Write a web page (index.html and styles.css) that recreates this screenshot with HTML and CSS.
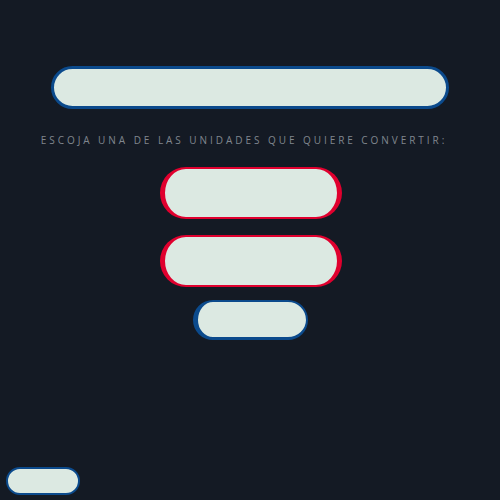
FILE: index.html
```html
<!DOCTYPE html>
<html lang="es">
<head>
<meta charset="utf-8">
<title>Conversor</title>
<link rel="stylesheet" href="styles.css">
</head>
<body>
<main class="page">
  <input class="field" type="text" aria-label="valor">
  <p class="prompt">ESCOJA UNA DE LAS UNIDADES QUE QUIERE CONVERTIR:</p>
  <div class="options">
    <button class="unit"></button>
    <button class="unit"></button>
    <button class="go"></button>
  </div>
</main>
<footer class="foot">
  <button class="back"></button>
</footer>
</body>
</html>
```

FILE: styles.css
```css
html, body {
  margin: 0;
  padding: 0;
}
body {
  background: #141a24;
  min-height: 100vh;
  display: flex;
  flex-direction: column;
  font-family: "Open Sans", Lato, sans-serif;
  box-sizing: border-box;
}
.page {
  display: flex;
  flex-direction: column;
  align-items: center;
  padding-top: 66px;
}
.field {
  box-sizing: border-box;
  width: 398px;
  height: 43px;
  margin: 0;
  background: #dce9e2;
  border: 3px solid #0b4a8c;
  border-radius: 22px;
  outline: none;
}
.prompt {
  margin: 25px 0 0;
  padding-right: 12px;
  color: #80868e;
  font-size: 10px;
  line-height: 12px;
  letter-spacing: 2.95px;
}
.options {
  display: flex;
  flex-direction: column;
  align-items: center;
  margin-top: 21px;
}
.unit {
  box-sizing: border-box;
  width: 182px;
  height: 52px;
  margin: 0 0 16px 2px;
  background: #dce9e2;
  border-style: solid;
  border-color: #e0002e;
  border-width: 2px 5px;
  border-radius: 26px;
  padding: 0;
}
.unit + .unit {
  margin-bottom: 13px;
}
.go {
  box-sizing: border-box;
  width: 115px;
  height: 40px;
  margin: 0;
  background: #dce9e2;
  border-style: solid;
  border-color: #0b4a8c;
  border-width: 2px 2px 3px 5px;
  border-radius: 20px;
  padding: 0;
}
.foot {
  margin-top: auto;
  padding: 0 0 5px 6px;
  display: flex;
}
.back {
  box-sizing: border-box;
  width: 74px;
  height: 28px;
  margin: 0;
  background: #dce9e2;
  border: 2px solid #0b4a8c;
  border-radius: 14px;
  padding: 0;
}
```
